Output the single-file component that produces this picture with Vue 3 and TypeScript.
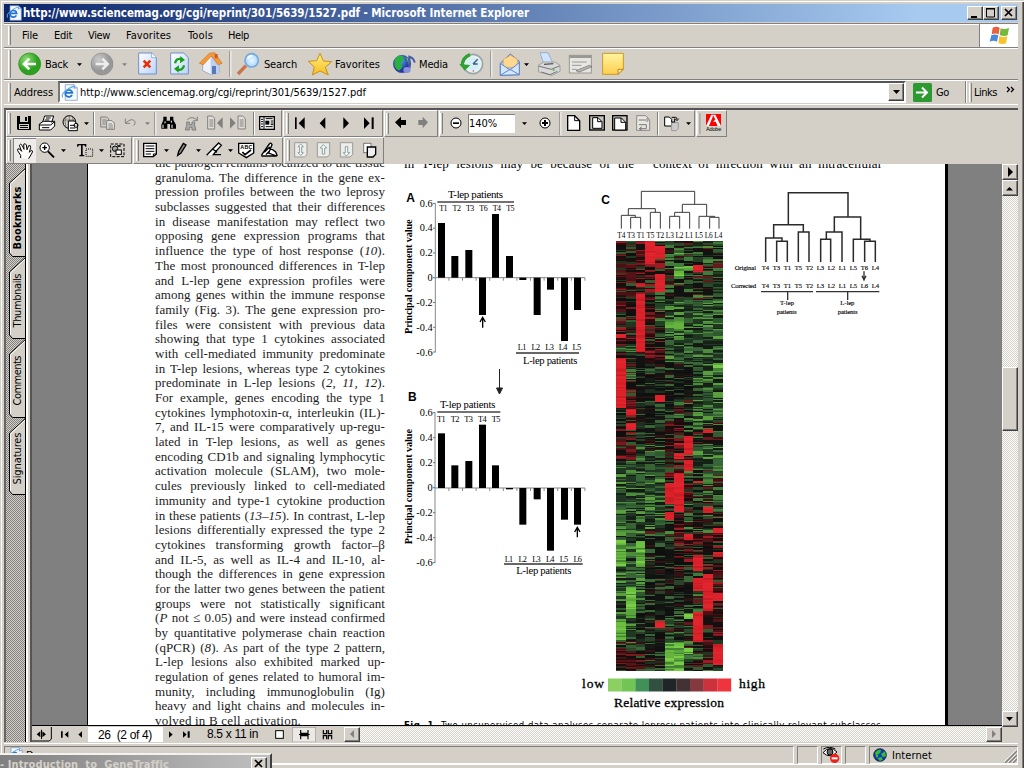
<script setup lang="ts">
interface Icon { x: number; w: number; ox?: number; k?: string; g: string }

// Stretches a label to its nominal width through letter spacing.
const vFit = {
  mounted(el: HTMLElement, b: { value: number }) {
    const n = (el.textContent ?? '').length
    el.style.letterSpacing = (b.value - el.getBoundingClientRect().width) / n + 'px'
  },
}

const p = (d: string, f = 'none', s = 'none', w = 3) =>
  `<path d="${d}" fill="${f}" stroke="${s}" stroke-width="${w}"/>`
const box = (x: number, y: number, w: number, h: number, f = 'none', s = 'none', k = 3) =>
  `<rect x="${x}" y="${y}" width="${w}" height="${h}" fill="${f}" stroke="${s}" stroke-width="${k}"/>`
const circ = (x: number, y: number, r: number, f = 'none', s = 'none', k = 3) =>
  `<circle cx="${x}" cy="${y}" r="${r}" fill="${f}" stroke="${s}" stroke-width="${k}"/>`
const dd = (x: number, y: number, f = '#000') => p(`M${x} ${y}h15l-7.5 8z`, f)
const grip = (x: number, y: number, h = 63) => box(x, y, 3, h, '#fff') + box(x + 6, y, 3, h, '#808080') + box(x + 3, y, 3, h, '#d4d0c8')
const sep = (x: number, y: number, h = 78) => box(x, y, 3, h, '#808080') + box(x + 3, y, 3, h, '#fff')
const vb = (i: Icon, y: number, h: number) => `${(i.x - (i.ox ?? 0)) * 3} ${y * 3} ${i.w * 3} ${h * 3}`

const G = '#808080'
const K = '#000'

const stdLeft: Icon[] = [
  { x: 5, w: 40, g: grip(24, 150, 84) + circ(89, 192, 33, 'url(#gGreen)', '#2a8a1c', 2) + p('M108 192H74M88 176L72 192L88 208', 'none', '#fff', 8) },
]
const stdA: Icon[] = [
  { x: 73, w: 13, g: dd(231, 190) },
  { x: 86, w: 34, g: circ(306, 192, 33, 'url(#gGray)', '#8c8c8c', 2) + p('M287 192h34M307 176l16 16l-16 16', 'none', '#eee', 8) },
  { x: 120, w: 12, g: dd(366, 190, G) },
  { x: 132, w: 34, g: p('M416 159h39l14 14v49h-53z', 'url(#gPage)', '#6f8fd0') + p('M455 159v14h14', '#fff', '#6f8fd0', 2) + p('M431 182l20 20M451 182l-20 20', 'none', '#e8300c', 8) },
  { x: 166, w: 32, g: p('M512 159h39l14 14v49h-53z', 'url(#gPage)', '#6f8fd0') + p('M525 190q4-18 22-12', 'none', '#16a016', 7) + p('M541 168l14 12l-15 10z', '#16a016') + p('M552 196q-3 18-22 12', 'none', '#16a016', 7) + p('M536 218l-14-12l15-10z', '#16a016') },
  { x: 198, w: 30, g: p('M608 190l24-26l26 30v24l-26 6l-24-12z', '#eef3fb', '#8090b0', 2) + p('M632 164l26 30v24l-26 6z', '#bdd0f0') + p('M598 190l30-30l16-2l22 32l-12 4l-20-26l-24 26z', '#f49a38', '#c8731c', 2) + box(644, 162, 9, 13, '#d05a30') + box(636, 198, 12, 24, '#5878b8') },
  { x: 228, w: 8, g: sep(688, 153, 78) },
  { x: 236, w: 24, g: p('M738 197l-24 25', 'none', '#c8734c', 10) + circ(755, 181, 20, 'url(#gLens)', '#78a8e0', 5) + p('M743 176q4-10 14-8', 'none', '#fff', 5) },
]
const stdB: Icon[] = [
  { x: 304, w: 29, g: p('M960 160l10 23l25 2l-19 17l9 23l-25-12l-23 12l6-24l-18-17l25-2z', 'url(#gStar)', '#c89018', 3) },
]
const stdC: Icon[] = [
  { x: 390, ox: 330, w: 28, g: circ(216, 192, 26, 'url(#gGlobe)', '#3848a8', 2) + p('M194 178q10-16 24-10l4 12l-10 10l6 10l-10 12q-18-8-14-24z', '#28b040') + p('M228 170q12 6 8 24', '#5cc84c') + p('M238 208v-38q14 4 16 18', 'none', '#4858a8', 6) + `<ellipse cx="231" cy="210" rx="11" ry="9" fill="#8890d8"/>` },
]
const stdD: Icon[] = [
  { x: 453, ox: 330, w: 34, g: circ(429, 192, 29, '#e8f0f0', '#98a8a8', 5) + circ(429, 192, 20, '#d4eef8') + p('M429 192l14-14M429 192h14', 'none', '#405880', 4) + p('M396 198q2-26 24-34', 'none', '#30a030', 10) + p('M388 192l16 20l17-17z', '#30a030') + circ(430, 213, 2, '#d33') },
  { x: 487, ox: 330, w: 10, g: sep(481, 153, 78) },
  { x: 497, ox: 330, w: 34, g: p('M511 190l30-28l27 22v40l-57 2z', '#a8c8f0', '#5078b8', 3) + p('M520 178l22-12l20 12v24h-42z', '#ffd890', '#e0a050', 2) + p('M511 190l29 20l28-22v36l-57 2zM511 226l29-18l28 16', '#d4e6fc', '#6088c8', 3) + dd(582, 190) },
  { x: 531, ox: 330, w: 34, g: p('M630 158h24l14 30h-28z', '#d0e4fc', '#7898c8', 2) + p('M625 196l16-10h34l15 10v18l-24 12l-40-10z', '#d8d8d8', '#888', 2) + p('M625 198l38 10l26-10M634 216l26 8l22-10', 'none', '#777', 3) + p('M642 193l28-2', 'none', '#555', 4) + box(668, 208, 6, 4, '#3b3') },
  { x: 565, ox: 330, w: 32, g: box(718, 166, 66, 53, '#e8e6e0', '#989894', 3) + box(718, 166, 66, 8, '#989894') + p('M726 186h44M726 196h28M726 208h14', 'none', '#999', 3) + p('M738 212l40-16l8 4l-38 16z', '#bbb', '#666', 2) },
  { x: 597, ox: 330, w: 34, g: p('M818 160h62v48l-16 15h-46z', 'url(#gNote)', '#d09820', 3) + p('M864 223v-15h16z', '#ffe9a0', '#b88a20', 3) },
]

const row1a: Icon[] = [
  { x: 7, w: 6, g: grip(24, 339) },
  { x: 13, w: 24, g: p('M51 348h42v42h-39l-3-3z', K) + box(60, 348, 24, 18, '#d4d0c8') + box(75, 351, 6, 12, K) + box(57, 372, 30, 15, '#d4d0c8') + box(60, 375, 24, 3, K) + box(60, 381, 24, 3, K) },
  { x: 37, w: 24, g: p('M128 366l6-18h27l-6 20M118 372l12-8h34v14l-12 12h-34z', '#fff', K) + p('M118 375h34l12-10M126 383h22M138 354h14M134 360h14', 'none', K) },
  { x: 61, w: 32, g: circ(208, 366, 19, '#d4d0c8', K) + p('M190 360h36M208 348v36M198 350q-6 16 0 32M217 350q8 16 2 30', 'none', '#555', 2) + p('M205 363h18l9 9v20h-27z', '#fff', K) + p('M210 376h16M210 384h16', 'none', K) + circ(228, 376, 6, 'none', K) + dd(252, 367) },
  { x: 93, w: 27, g: sep(279, 336, 70) + p('M302 351h18l6 6v24h-24z', '#d4d0c8', G) + p('M320 362h16l7 7v19h-23z', '#e8e6e0', G) + p('M307 360h12M307 366h10M307 372h10M325 372h12M325 378h14M325 384h14', 'none', G) },
  { x: 120, w: 34, g: p('M376 356v14h14M377 369q20-18 28-4q2 6-4 12', 'none', G) + dd(435, 367, G) },
  { x: 154, w: 28, g: sep(463, 336, 70) + p('M490 350h10v12h10v-12h10v10l8 14v12h-18v-14h-8v14h-18v-12l6-14z', K) + p('M489 374v10M495 364v6M516 374v10M514 362v6', 'none', '#fff') },
  { x: 182, w: 22, g: p('M560 366h8v8h8v-8h8v10l4 14h-12v-8h-8v8h-12l4-14z', '#aaa', G) + p('M562 360q8-12 24-4l6 5M592 350v12h-12', 'none', G) },
  { x: 204, w: 23, g: p('M623 348h14l7 7v32h-21z', '#e0ded8', G) + p('M628 360h12M628 366h12M628 372h12M628 378h12', 'none', G) + p('M668 352v34l-17-17z', G) },
  { x: 227, w: 23, g: p('M690 352v34l17-17z', G) + p('M714 348h14l8 8v31h-22z', '#e0ded8', G) + p('M719 360h12M719 366h12M719 372h12M719 378h12', 'none', G) },
  { x: 250, w: 30, g: sep(759, 336, 70) + box(779, 350, 44, 38, '#fff', K, 4) + p('M792 350v38', 'none', K, 3) + p('M783 358h6M783 365h6M783 372h6M783 380h6M797 356h21M797 380h21M812 363h8M812 369h8M812 374h8', 'none', K) + box(796, 362, 12, 12, K) },
]
const row1b: Icon[] = [
  { x: 283, w: 30, g: grip(855, 339) + box(882, 352, 5, 35, K) + p('M911 352v35l-18-17z', K) },
  { x: 313, w: 20, g: p('M973 352v35l-17-17z', K) },
  { x: 333, ox: 330, w: 24, g: p('M37 352v35l17-17z', K) },
  { x: 357, ox: 330, w: 24, g: p('M99 352v35l17-17z', K) + box(122, 352, 6, 35, K) },
]
const row1c: Icon[] = [
  { x: 384, ox: 330, w: 26, g: grip(165, 339) + p('M192 367l18-17v10h15v15h-15v10z', K) },
  { x: 410, ox: 330, w: 26, g: p('M291 367l-16-17v10h-13v15h13v10z', G) },
]
const row1d: Icon[] = [
  { x: 439, ox: 330, w: 27, g: grip(327, 339) + circ(375, 369, 15, '#fff', K) + box(366, 367, 18, 5, K) },
]
const row1e: Icon[] = [
  { x: 515, ox: 330, w: 17, g: dd(573, 367) },
  { x: 532, ox: 330, w: 25, g: circ(642, 369, 15, '#fff', K) + p('M642 360v18M633 369h18', 'none', K, 6) },
  { x: 557, ox: 330, w: 27, g: sep(685, 336, 70) + p('M710 347h21l15 15v29h-36z', '#fff', K, 4) + p('M731 347v15h15', 'none', K, 3) },
  { x: 584, ox: 330, w: 23, g: box(776, 347, 44, 43, '#c8c4bc', K, 4) + p('M785 353h16l12 12v20h-28z', '#fff', K) + p('M800 353v12h12', 'none', K) },
  { x: 607, ox: 330, w: 23, g: box(845, 347, 43, 43, '#c8c4bc', K, 4) + p('M851 354h20l13 13v23h-33z', '#fff', K) + p('M870 354v13h14', 'none', K) },
  { x: 630, ox: 330, w: 25, g: p('M917 347h27l12 12v32h-39z', '#e8e6e0', '#888') + p('M923 360h24M947 354l5 6l-5 6M924 374h22v12h-22M933 380l-8 6l8 6', 'none', '#777', 3) },
  { x: 655, ox: 670, w: 38, g: sep(-42, 336, 70) + p('M-19 351h14l7 7v20h-21z', '#fff', K) + p('M2 368h20v18l-6 6h-14z', '#ccc', '#999') + p('M2 352h12q4 0 4 6M12 356l6 6l5-6M3 366h8v-10', 'none', K) + dd(45, 367) },
]
const row1f: Icon[] = [
  { x: 696, ox: 670, w: 29, g: grip(79, 339) + box(105, 342, 45, 36, '#f00') + p('M105 378l16-34h12l17 34h-10l-6-13h-8l7-6l-6-13l-13 32z', '#fff') + `<text x="105" y="394" textLength="46" font-size="17" font-family="Liberation Sans">Adobe</text>` },
]
const row2a: Icon[] = [
  { x: 7, w: 6, g: grip(24, 420) },
  { x: 13, w: 23, k: 'down', g: p('M62 474v-8l-9-14q-2-8 6-5l6 7l-7-18q4-7 8 0l6 12l-1-15q5-5 8 2l2 14l5-12q6-3 6 5l-4 15l6-6q6 0 2 8l-10 17', '#fff', K) },
  { x: 36, w: 31, g: circ(134, 443, 14, '#fff', K) + p('M144 454l18 18', 'none', K, 6) + p('M134 436v14M127 443h14', 'none', K, 4) + dd(183, 448) },
  { x: 67, w: 39, g: p('M232 432h27v8h-3l-3-4h-5v28l5 2v3h-15v-3l5-2v-28h-6l-3 4h-3z', K) + `<rect x="258" y="447" width="20" height="22" fill="none" stroke="#000" stroke-width="3" stroke-dasharray="3 3"/>` + dd(297, 448) },
  { x: 106, w: 25, g: `<rect x="332" y="432" width="40" height="38" fill="none" stroke="#000" stroke-width="3" stroke-dasharray="9 4"/>` + circ(345, 446, 8, '#aaa', K) + box(348, 450, 16, 13, '#fff', K) + p('M352 438h10', 'none', K, 5) },
]
const row2b: Icon[] = [
  { x: 133, w: 37, g: grip(405, 420) + p('M428 430h38v32l-9 8h-29z', '#fff', K, 4) + p('M434 438h26M434 446h26M434 454h26M434 462h16M457 470v-8h9', 'none', K) + dd(489, 448) },
  { x: 170, w: 33, g: p('M530 466l3-12l14-24l8 5l-15 24z', '#888', K, 4) + dd(585, 448) },
  { x: 203, w: 31, g: p('M617 466l18-19l18-18l8 7l-17 19l-7 9h23M636 448l12 9', '#fff', K, 4) + dd(681, 448) },
  { x: 234, w: 24, g: p('M713 430h45v29l-22 14l-23-14z', '#fff', K, 4) + `<text x="718" y="446" textLength="36" font-size="16" font-weight="bold" font-family="Liberation Sans">ABC</text>` + p('M724 456l8 8l18-14', 'none', K, 5) },
  { x: 258, w: 24, g: p('M781 466l24-34q4-6 8 2l-10 25l24 9h-46M790 457l15-15l19 14l5 12M795 464l12-13', '#fff', K, 4) },
]
const page2 = (x: number) => p(`M${x} 428h37v36l-8 7h-29z`, '#eeece8', '#999')
const row2c: Icon[] = [
  { x: 284, w: 31, g: grip(858, 420) + page2(881) + p('M899 432l-8 8h5v18h-5l8 8l8-8h-5v-18h5z', '#fff', '#527878', 2) },
  { x: 315, w: 23, g: page2(949) + p('M967 434l-9 10h6v18h7v-18h6z', '#fff', '#527878', 2) },
  { x: 338, ox: 330, w: 21, g: page2(28) + p('M46 468l-9-10h6v-18h7v18h6z', '#fff', '#527878', 2) },
  { x: 359, ox: 330, w: 23, g: box(98, 430, 22, 28, '#fff', '#777') + p('M109 441h25v22l-8 8h-17z', '#eee', K, 4) },
]

const articleLines = [
  'the pathogen remains localized to the tissue', 'granuloma. The difference in the gene ex-', 'pression profiles between the two leprosy',
  'subclasses suggested that their differences', 'in disease manifestation may reflect two', 'opposing gene expression programs that',
  'influence the type of host response (<i>10</i>).', 'The most pronounced differences in T-lep', 'and L-lep gene expression profiles were',
  'among genes within the immune response', 'family (Fig. 3). The gene expression pro-', 'files were consistent with previous data',
  'showing that type 1 cytokines associated', 'with cell-mediated immunity predominate', 'in T-lep lesions, whereas type 2 cytokines',
  'predominate in L-lep lesions (<i>2, 11, 12</i>).', 'For example, genes encoding the type 1', 'cytokines lymphotoxin-α, interleukin (IL)-',
  '7, and IL-15 were comparatively up-regu-', 'lated in T-lep lesions, as well as genes', 'encoding CD1b and signaling lymphocytic',
  'activation molecule (SLAM), two mole-', 'cules previously linked to cell-mediated', 'immunity and type-1 cytokine production',
  'in these patients (<i>13–15</i>). In contrast, L-lep', 'lesions differentially expressed the type 2', 'cytokines transforming growth factor–β',
  'and IL-5, as well as IL-4 and IL-10, al-', 'though the differences in gene expression', 'for the latter two genes between the patient',
  'groups were not statistically significant', '(<i>P</i> not ≤ 0.05) and were instead confirmed', 'by quantitative polymerase chain reaction',
  '(qPCR) (<i>8</i>). As part of the type 2 pattern,', 'L-lep lesions also exhibited marked up-', 'regulation of genes related to humoral im-',
  'munity, including immunoglobulin (Ig)', 'heavy and light chains and molecules in-',
]

const barX = [129, 169, 211, 252, 291, 333, 373, 416, 456, 498, 537]
const barsA = [189, 288, 270, 465, 162, 288, 360, 465, 389, 543, 450]
const barsB = [220, 316, 303, 194, 316, 388, 494, 418, 572, 479, 494]
const ticks = ['0.6', '0.4', '0.2', '0', '-0.2', '-0.4', '-0.6']
const topA = ['T1', 'T2', 'T3', 'T6', 'T4', 'T5']
const botA = ['L1', 'L2', 'L3', 'L4', 'L5']
const topB = ['T1', 'T2', 'T3', 'T4', 'T5']
const botB = ['L1', 'L2', 'L3', 'L4', 'L5', 'L6']
const heatCols = ['T4', 'T3', 'T1', 'T5', 'T2', 'L3', 'L2', 'L1', 'L5', 'L6', 'L4']
const original = ['T4', 'T3', 'T1', 'T5', 'T2', 'L3', 'L2', 'L1', 'L5', 'T6', 'L4']
const corrected = ['T4', 'T3', 'T1', 'T5', 'T2', 'L3', 'L2', 'L1', 'L5', 'L6', 'L4']
const legend = ['#8ccf62', '#72c455', '#41905a', '#32503f', '#202628', '#433234', '#84393e', '#cc323c', '#ee343c']

// Expression zones: [first column, last column, top, bottom, kind]
type Zone = [number, number, number, number, string]
const zones: Zone[] = [
  [3, 3, 241, 264, 'R'], [4, 4, 246, 258, 'R'], [4, 4, 273, 292, 'R'], [8, 8, 264, 272, 'R'], [2, 2, 283, 287, 'R'], [2, 2, 294, 352, 'R'],
  [0, 0, 334, 338, 'R'], [0, 0, 357, 408, 'R'], [1, 1, 407, 415, 'R'], [1, 1, 423, 429, 'R'], [4, 4, 395, 401, 'R'], [7, 7, 434, 455, 'R'],
  [7, 7, 460, 471, 'R'], [6, 6, 442, 445, 'R'], [6, 6, 453, 458, 'R'], [6, 6, 472, 512, 'R'], [5, 5, 483, 503, 'R'], [5, 5, 512, 520, 'R'],
  [8, 8, 479, 483, 'R'], [10, 10, 527, 532, 'R'], [10, 10, 551, 556, 'R'], [8, 8, 555, 570, 'R'], [8, 8, 578, 591, 'R'], [8, 8, 612, 642, 'R'],
  [9, 9, 573, 611, 'R'], [7, 7, 534, 540, 'R'], [10, 10, 643, 665, 'R'], [4, 4, 621, 628, 'R'], [9, 9, 507, 512, 'R'], [9, 9, 429, 433, 'R'], [10, 10, 593, 601, 'R'],
  [6, 6, 266, 278, 'B'], [7, 7, 266, 271, 'B'], [6, 6, 251, 255, 'B'], [6, 6, 319, 330, 'B'], [5, 5, 320, 327, 'B'], [10, 10, 361, 372, 'B'],
  [0, 0, 540, 567, 'B'], [2, 2, 541, 566, 'B'], [1, 1, 587, 617, 'B'], [0, 0, 618, 640, 'B'], [5, 6, 643, 671, 'B'], [7, 7, 612, 618, 'B'], [7, 7, 648, 654, 'B'],
  [1, 1, 304, 333, 'D'], [4, 4, 258, 273, 'D'], [1, 1, 380, 424, 'D'], [3, 4, 340, 362, 'D'], [0, 1, 429, 460, 'D'], [5, 6, 420, 480, 'D'], [8, 10, 532, 572, 'D'],
  [10, 10, 572, 643, 'D'], [9, 9, 611, 665, 'D'], [6, 6, 515, 540, 'D'], [7, 7, 480, 500, 'D'], [6, 7, 540, 570, 'D'], [0, 2, 650, 671, 'D'], [0, 3, 241, 345, 'D'],
  [2, 7, 362, 400, 'K'], [3, 7, 540, 612, 'K'], [0, 5, 400, 440, 'K'], [2, 4, 612, 671, 'K'],
  [8, 10, 352, 420, 'G'], [8, 10, 445, 470, 'G'], [0, 2, 520, 640, 'G'], [5, 10, 300, 362, 'G'], [0, 4, 450, 530, 'G'],
]
const palette: Record<string, string[]> = {
  R: ['#dc222b', '#d81f28', '#dc222b', '#e0252e', '#c81d25'],
  B: ['#66b43e', '#78cc48', '#5aa53c', '#6cc040', '#438435'],
  D: ['#2e0c0e', '#541317', '#141010', '#781a1e', '#151010', '#9b1c22', '#1e3820', '#461216', '#100f0f', '#325c30'],
  K: ['#0f1010', '#151a14', '#0e0e0e', '#1d2d1e', '#294229', '#121412', '#351113', '#3a6637', '#121212'],
  G: ['#386434', '#1f3820', '#4d8c3a', '#152016', '#5a9e3e', '#2e5830', '#38663a', '#223424', '#131813'],
  M: ['#244024', '#111211', '#335c30', '#14120f', '#4e8b3a', '#3a1214', '#182618', '#427a3c', '#111', '#641a1d', '#274b2a'],
}
let seed = 20031
const rnd = () => {
  seed = (seed * 1103515245 + 12345) % 2147483648
  return seed / 2147483648
}
const cells: { x: number; y: number; h: number; c: string }[] = []
for (let c = 0; c < 11; c++) {
  let y = 241
  while (y < 671) {
    const z = zones.find(q => c >= q[0] && c <= q[1] && y >= q[2] && y < q[3])
    const set = palette[z ? z[4] : 'M']
    const h = Math.min(1 + Math.floor(rnd() * rnd() * 3.4), 671 - y)
    cells.push({ x: 616.2 + c * 9.66, y, h, c: set[Math.floor(rnd() * set.length)] })
    y += h
  }
}
const sideTabs = [
  { t: 'Bookmarks', y: 169, e: 257, b: true, w: 63, m: 218 },
  { t: 'Thumbnails', y: 258, e: 339, b: false, w: 54, m: 300.5 },
  { t: 'Comments', y: 340, e: 418, b: false, w: 50, m: 380.5 },
  { t: 'Signatures', y: 419, e: 495, b: false, w: 52, m: 458.5 },
]
const menu = [{ t: 'File', w: 16, x: 22 }, { t: 'Edit', w: 18, x: 54 }, { t: 'View', w: 22, x: 88 }, { t: 'Favorites', w: 45, x: 126 }, { t: 'Tools', w: 25, x: 188 }, { t: 'Help', w: 21, x: 228 }]
const gap = (i: number) => (i ? menu[i].x - menu[i - 1].x - menu[i - 1].w : 17)
</script>

<template>
  <div class="window">
    <svg class="defs" width="0" height="0">
      <defs>
        <radialGradient id="gGreen" cx=".35" cy=".3"><stop offset="0" stop-color="#8be070" /><stop offset="1" stop-color="#2da020" /></radialGradient>
        <radialGradient id="gGray" cx=".35" cy=".3"><stop offset="0" stop-color="#ccc" /><stop offset="1" stop-color="#989898" /></radialGradient>
        <linearGradient id="gPage" x2="1" y2="1"><stop offset="0" stop-color="#fff" /><stop offset="1" stop-color="#b8d4f8" /></linearGradient>
        <radialGradient id="gLens"><stop offset="0" stop-color="#e8f8ff" /><stop offset="1" stop-color="#a8d8fc" /></radialGradient>
        <linearGradient id="gStar" x2="0" y2="1"><stop offset="0" stop-color="#fff080" /><stop offset="1" stop-color="#f8bc20" /></linearGradient>
        <radialGradient id="gGlobe" cx=".4" cy=".3"><stop offset="0" stop-color="#58b0f0" /><stop offset="1" stop-color="#2838a0" /></radialGradient>
        <linearGradient id="gNote" x2="0" y2="1"><stop offset="0" stop-color="#fff4a0" /><stop offset="1" stop-color="#ffcf50" /></linearGradient>
        <pattern id="hatch" width="2" height="2" patternUnits="userSpaceOnUse"><rect width="2" height="2" fill="#d4d0c8" /><rect width="1" height="1" fill="#808080" /><rect x="1" y="1" width="1" height="1" fill="#808080" /></pattern>
        <symbol id="ie" viewBox="0 0 48 48">
          <path d="M12 2h25l9 9v35H12z" fill="#f4f8ff" stroke="#7890c0" stroke-width="2" />
          <path d="M37 2v9h9" fill="#cfe0f8" stroke="#7890c0" stroke-width="2" />
          <path d="M31 31a10 10 0 1 1 1-6H14" fill="none" stroke="#2474d0" stroke-width="5" />
          <path d="M5 38Q-2 28 20 14T37 13" fill="none" stroke="#58a8ee" stroke-width="3" />
        </symbol>
      </defs>
    </svg>

    <header class="title">
      <svg width="16" height="16"><use href="#ie" /></svg>
      <span v-fit="506" class="fit cap">http://www.sciencemag.org/cgi/reprint/301/5639/1527.pdf - Microsoft Internet Explorer</span>
      <div class="sysbtns">
        <button><svg width="14" height="12"><path d="M3 9h6v2H3z" /></svg></button>
        <button><svg width="14" height="12"><path d="M2.5 2h8v8h-8zM2 1.5h9" fill="none" stroke="#000" /></svg></button>
        <button class="close"><svg width="14" height="12"><path d="M3 2l7 7M10 2L3 9" fill="none" stroke="#000" stroke-width="1.7" /></svg></button>
      </div>
    </header>

    <nav class="band menubar">
      <i class="grip" />
      <span v-for="(m, i) in menu" :key="m.t" v-fit="m.w" class="fit" :style="{ marginLeft: gap(i) - (i ? 0 : 6) + 'px' }">{{ m.t }}</span>
      <div class="flag">
        <svg width="38" height="23" viewBox="930 73 114 69">
          <path d="M968 84q10-6 21 0l-3 20q-10-5-21 0z" fill="#e8603c" />
          <path d="M992 86q12 5 25-1l-4 22q-12 4-24-1z" fill="#74b83c" />
          <path d="M964 107q10-5 21 0l-4 19q-10-5-22 0z" fill="#4a88dc" />
          <path d="M988 109q12 5 24 1l-4 21q-12 4-23-1z" fill="#f8c22c" />
        </svg>
      </div>
    </nav>

    <div class="band standard">
      <svg v-for="i in stdLeft" :key="i.x" :width="i.w" height="30" :viewBox="vb(i, 49, 30)" v-html="i.g" />
      <span v-fit="23" class="fit b1">Back</span>
      <svg v-for="i in stdA" :key="i.x" :width="i.w" height="30" :viewBox="vb(i, 49, 30)" v-html="i.g" />
      <span v-fit="33" class="fit b2">Search</span>
      <svg v-for="i in stdB" :key="i.x" :width="i.w" height="30" :viewBox="vb(i, 49, 30)" v-html="i.g" />
      <span v-fit="45" class="fit b3">Favorites</span>
      <svg v-for="i in stdC" :key="i.x" :width="i.w" height="30" :viewBox="vb(i, 49, 30)" v-html="i.g" />
      <span v-fit="29" class="fit b4">Media</span>
      <svg v-for="i in stdD" :key="i.x" :width="i.w" height="30" :viewBox="vb(i, 49, 30)" v-html="i.g" />
    </div>

    <div class="band address">
      <i class="grip" />
      <span v-fit="39" class="fit lab">Address</span>
      <div class="field">
        <svg width="17" height="17"><use href="#ie" /></svg>
        <span v-fit="286" class="fit url">http://www.sciencemag.org/cgi/reprint/301/5639/1527.pdf</span>
        <button class="drop"><svg width="13" height="14"><path d="M3 5h7l-3.500 4z" /></svg></button>
      </div>
      <svg class="go" width="19" height="19"><rect width="19" height="19" rx="1.500" fill="#2c9a30" /><path d="M3 9.500h11M9 4.500l5 5l-5 5" fill="none" stroke="#fff" stroke-width="2" /></svg>
      <span v-fit="13" class="fit golab">Go</span>
      <div class="links"><i class="grip" /><span v-fit="23" class="fit">Links</span>
        <svg width="9" height="18"><path d="M1 4l2.500 2.500L1 9M5 4l2.500 2.500L5 9" fill="none" stroke="#000" stroke-width="1.300" /></svg></div>
    </div>

    <main class="plugin">
      <div class="tools">
        <div class="group w274"><svg v-for="i in row1a" :key="i.x" :width="i.w" height="25" :viewBox="vb(i, 111, 25)" v-html="i.g" /></div>
        <div class="group w100"><svg v-for="i in row1b" :key="i.x" :width="i.w" height="25" :viewBox="vb(i, 111, 25)" v-html="i.g" /></div>
        <div class="group w54"><svg v-for="i in row1c" :key="i.x" :width="i.w" height="25" :viewBox="vb(i, 111, 25)" v-html="i.g" /></div>
        <div class="group w257">
          <svg v-for="i in row1d" :key="i.x" :width="i.w" height="25" :viewBox="vb(i, 111, 25)" v-html="i.g" />
          <div class="zoombox"><span v-fit="28" class="fit">140%</span></div>
          <svg v-for="i in row1e" :key="i.x" :width="i.w" height="25" :viewBox="vb(i, 111, 25)" v-html="i.g" />
        </div>
        <div class="group w31"><svg v-for="i in row1f" :key="i.x" :width="i.w" height="25" :viewBox="vb(i, 111, 25)" v-html="i.g" /></div>
      </div>
      <div class="tools">
        <div class="group w126"><svg v-for="i in row2a" :key="i.x" :class="i.k" :width="i.w" height="25" :viewBox="vb(i, 138, 25)" v-html="i.g" /></div>
        <div class="group w151"><svg v-for="i in row2b" :key="i.x" :width="i.w" height="25" :viewBox="vb(i, 138, 25)" v-html="i.g" /></div>
        <div class="group w100"><svg v-for="i in row2c" :key="i.x" :width="i.w" height="25" :viewBox="vb(i, 138, 25)" v-html="i.g" /></div>
      </div>

      <div class="body">
        <svg class="side" width="20" height="578" viewBox="6 164 20 578">
          <rect x="6" y="164" width="20" height="578" fill="url(#hatch)" />
          <g v-for="t in sideTabs" :key="t.t">
            <path :d="`M26 ${t.y - 1}L9.500 ${t.y + 14}V${t.e - 4}l3 3.500H26z`" fill="#d4d0c8" stroke="#000" />
            <path :d="`M25 ${t.y + 1}L10.500 ${t.y + 15}V${t.e - 4}`" fill="none" stroke="#fff" />
            <text :x="-t.m" y="21" transform="rotate(-90)" text-anchor="middle" :textLength="t.w" :font-weight="t.b ? 700 : 400" font-size="11">{{ t.t }}</text>
          </g>
          <path d="M25.500 164V742" stroke="#000" />
        </svg>
        <div class="rail" />

        <div class="center">
          <div class="canvas">
            <article class="paper">
              <div class="column">
                <p v-for="l in articleLines" :key="l" v-html="l" />
                <p class="last">volved in B cell activation.</p>
              </div>
              <svg class="figure" width="545" height="561" viewBox="400 164 545 561">
                <g font-size="13">
                  <text x="404" y="167.500" textLength="230" word-spacing="4">in T-lep lesions may be because of the</text>
                  <text x="653" y="167.500" textLength="229" word-spacing="3">context of infection with an intracellular</text>
                </g>

                <g transform="translate(395 160) scale(.33333)">
                  <text x="34" y="127" class="sans">A</text>
                  <text x="159" y="115" textLength="165" font-size="33">T-lep patients</text>
                  <path d="M127 126H357" stroke="#444" stroke-width="5" />
                  <text v-for="(t, i) in topA" :key="t" :x="145 + i * 40.200" y="154" text-anchor="middle" textLength="25" font-size="24">{{ t }}</text>
                  <path d="M121 130V577M121 353H570" stroke="#888" stroke-width="3" fill="none" />
                  <path v-for="i in 7" :key="i" :d="`M114 ${56 + i * 74.300}h7`" stroke="#777" stroke-width="3" />
                  <path v-for="i in 11" :key="'x' + i" :d="`M${121 + i * 40.800} 353v9`" stroke="#888" stroke-width="3" />
                  <text v-for="(t, i) in ticks" :key="t" x="113" :y="140 + i * 74.500" text-anchor="end" font-size="31">{{ t }}</text>
                  <rect v-for="(b, i) in barsA" :key="i" :x="barX[i]" :y="Math.min(b, 353)" width="21" :height="Math.abs(b - 353)" />
                  <text transform="translate(51 350) rotate(-90)" text-anchor="middle" textLength="344" font-size="31" font-weight="bold">Principal component value</text>
                  <path d="M263 503V474M255 486l8-14l8 14" fill="none" stroke="#000" stroke-width="4" />
                  <text v-for="(t, i) in botA" :key="t" :x="381 + i * 41.200" y="570" text-anchor="middle" textLength="26" font-size="25">{{ t }}</text>
                  <path d="M363 579H552" stroke="#333" stroke-width="4" />
                  <text x="384" y="612" textLength="163" font-size="32">L-lep patients</text>
                </g>
                <path d="M499.500 369V392M496.500 388l3 6l3-6z" stroke="#222" fill="#222" />

                <g transform="translate(395 360) scale(.33333)">
                  <text x="39" y="123" class="sans">B</text>
                  <text x="135" y="145" textLength="166" font-size="32">T-lep patients</text>
                  <path d="M127 156H316" stroke="#444" stroke-width="4" />
                  <text v-for="(t, i) in topB" :key="t" :x="139 + i * 41" y="185" text-anchor="middle" textLength="26" font-size="25">{{ t }}</text>
                  <path d="M120 157V608M120 384H570" stroke="#888" stroke-width="3" fill="none" />
                  <path v-for="i in 7" :key="i" :d="`M114 ${83 + i * 75}h7`" stroke="#777" stroke-width="3" />
                  <path v-for="i in 11" :key="'x' + i" :d="`M${121 + i * 40.800} 384v9`" stroke="#888" stroke-width="3" />
                  <text v-for="(t, i) in ticks" :key="t" x="113" :y="168 + i * 75" text-anchor="end" font-size="31">{{ t }}</text>
                  <rect v-for="(b, i) in barsB" :key="i" :x="barX[i]" :y="Math.min(b, 384)" width="21" :height="Math.abs(b - 384)" />
                  <text transform="translate(50 380) rotate(-90)" text-anchor="middle" textLength="346" font-size="31" font-weight="bold">Principal component value</text>
                  <path d="M547 532V504M539 516l8-14l8 14" fill="none" stroke="#000" stroke-width="4" />
                  <text v-for="(t, i) in botB" :key="t" :x="342 + i * 41.200" y="605" text-anchor="middle" textLength="25" font-size="25">{{ t }}</text>
                  <path d="M327 612H563" stroke="#333" stroke-width="4" />
                  <text x="364" y="642" textLength="165" font-size="32">L-lep patients</text>
                </g>

                <g transform="translate(590 160) scale(.33333)">
                  <text x="34" y="131" class="sans">C</text>
                  <path d="M154 146V94H314V133M115 166V146H196V157M94 206V166H136V172M122 206V172H152V206M181 206V157H211V206M277 157V133H350V169M254 169V157H299V206M239 206V169H269V206M327 206V169H374V172M359 206V172H387V206" fill="none" stroke="#3a3a3a" stroke-width="3" />
                  <text v-for="(t, i) in heatCols" :key="t" :x="94 + i * 29.100" y="233" text-anchor="middle" textLength="24" font-size="22">{{ t }}</text>
                  <path d="M595 194V98H774V171M551 234V194H640V216M527 306V234H576V244M560 306V244H592V306M625 306V216H657V306M733 216V171H812V238M709 238V216H756V306M692 306V238H722V306M790 306V238H840V244M824 306V244H856V306" fill="none" stroke="#2a2a2a" stroke-width="4.500" />
                  <g font-size="20" stroke="#000" stroke-width=".4">
                    <text x="434" y="329" textLength="64">Original</text>
                    <text x="423" y="384" textLength="75">Corrected</text>
                    <text v-for="(t, i) in original" :key="t" :x="526 + i * 33" y="329" text-anchor="middle" textLength="22">{{ t }}</text>
                    <text v-for="(t, i) in corrected" :key="t" :x="526 + i * 33" y="384" text-anchor="middle" textLength="22">{{ t }}</text>
                    <text x="570" y="436" textLength="42">T-lep</text>
                    <text x="560" y="462" textLength="60">patients</text>
                    <text x="751" y="436" textLength="42">L-lep</text>
                    <text x="743" y="462" textLength="60">patients</text>
                  </g>
                  <path d="M513 395H669M678 395H868M593 395v25M773 395v25M822 334v24M816 347l6 13l6-13" fill="none" stroke="#333" stroke-width="4" />
                </g>

                <g class="heat" shape-rendering="crispEdges">
                  <rect v-for="(c, i) in cells" :key="i" :x="c.x" :y="c.y" width="9.800" :height="c.h" :fill="c.c" />
                </g>
                <rect v-for="(c, i) in legend" :key="c" :x="608 + i * 13.670" y="678.500" width="13.800" height="13" :fill="c" />
                <g font-size="13.500" stroke="#000" stroke-width=".3">
                  <text x="582" y="688" textLength="22">low</text>
                  <text x="739" y="688" textLength="26">high</text>
                  <text x="614" y="707" textLength="110">Relative expression</text>
                </g>
                <text x="404" y="728" textLength="480" class="caption"><tspan font-weight="bold">Fig. 1.</tspan> Two unsupervised data analyses separate leprosy patients into clinically relevant subclasses.</text>
              </svg>
            </article>
          </div>

          <footer class="pagebar">
            <svg width="20" height="15" viewBox="93 51 60 45"><path d="M93 93h52l6-6V51" fill="none" stroke="#000" stroke-width="3" /><path d="M107 73l11-9v18zM135 73l-11-9v18zM120 59h3v28h-3z" /></svg>
            <svg width="36" height="15" viewBox="153 51 108 45"><path d="M180 64h5v19h-5zM202 64v19l-11-9.500zM243 64v19l-11-9.500z" /></svg>
            <div class="pageno"><span v-fit="54" class="fit">26&nbsp; (2 of 4)</span></div>
            <svg width="44" height="15" viewBox="489 51 132 45"><path d="M507 64v19l11-9.500zM549 64v19l11-9.500zM563 64h6v19h-6z" /></svg>
            <span v-fit="51" class="fit dim">8.5 x 11 in</span>
            <svg width="87" height="15" viewBox="771 51 261 45">
              <rect x="827" y="62" width="23" height="23" fill="#fff" stroke="#000" stroke-width="3" />
              <rect x="877" y="52" width="70" height="44" fill="#ece9e4" stroke="#999" stroke-width="2" />
              <path d="M902 60v10h22V60M902 88V77h22v11M897 73.500h32M970 60v11h10V60M985 60v11h10V60M970 88V77h10v11M985 88V77h10v11" fill="none" stroke="#000" stroke-width="3.500" />
            </svg>
            <div class="hscroll">
              <button><svg width="12" height="12"><path d="M8 2v8L4 6z" fill="#808080" /></svg></button>
              <button><svg width="12" height="12"><path d="M4 2v8l4-4z" fill="#808080" /></svg></button>
            </div>
          </footer>
        </div>

        <div class="vscroll">
          <button><svg width="12" height="12"><path d="M4 1v10l5-5z" /></svg></button>
          <button><svg width="12" height="11"><path d="M2 7.500h7L5.500 4z" /></svg></button>
          <div class="track"><div class="thumb" /></div>
          <button><svg width="12" height="12"><path d="M2 4h7L5.500 8z" /></svg></button>
        </div>
      </div>
    </main>

    <footer class="status">
      <div class="pane grow"><svg width="16" height="16"><use href="#ie" /></svg><span class="done">Done</span></div>
      <div class="pane small" />
      <div class="pane small">
        <svg width="20" height="17" viewBox="246 320 60 51"><path d="M249 337q20-24 42-2q-20 22-42 2z" fill="#fff" stroke="#000" stroke-width="3" /><circle cx="270" cy="335" r="9" fill="#666" stroke="#000" stroke-width="3" /><path d="M250 326q18-10 36 0" fill="none" stroke="#000" stroke-width="3" /><circle cx="284" cy="354" r="14" fill="#f02018" /><path d="M275 354h18" stroke="#fff" stroke-width="6" /></svg>
      </div>
      <div class="pane small" />
      <div class="pane zone">
        <svg width="14" height="14" viewBox="0 0 42 42"><circle cx="21" cy="21" r="19" fill="#1838b8" stroke="#000" stroke-width="2" /><path d="M6 14q8-11 18-8l-2 8l-8 6l2 6l-6 3zM24 18l12-8l3 14l-9 4zM14 30l12-3l3 9l-9 3z" fill="#30c030" /></svg>
        <span v-fit="40" class="fit">Internet</span>
        <svg class="resize" width="13" height="13"><path d="M1 13L13 1M5 13l8-8M9 13l4-4" stroke="#808080" stroke-width="1.500" /><path d="M0 12L12 0M4 12l8-8M8 12l4-4" stroke="#fff" stroke-width=".7" /></svg>
      </div>
    </footer>
    <aside class="popup">
      <span v-fit="168" class="fit">- Introduction&nbsp; to&nbsp; GeneTraffic</span>
      <button><svg width="14" height="12"><path d="M3 2l7 7M10 2L3 9" fill="none" stroke="#000" stroke-width="1.700" /></svg></button>
    </aside>
  </div>
</template>

<style>
html, body { margin: 0; background: #d4d0c8; overflow: hidden; }
</style>
<style scoped>
.window { position: relative; box-sizing: border-box; width: 1024px; height: 768px; overflow: hidden; display: flex; flex-direction: column; padding: 4px 6px 0 4px; background: #d4d0c8; box-shadow: inset 1px 1px #d4d0c8, inset 2px 2px #fff, inset -1px 0 #404040, inset -2px 0 #808080; font: 11px "DejaVu Sans Condensed", "DejaVu Sans", sans-serif; color: #000; }
.window * { box-sizing: border-box; }
.defs { position: absolute; }
svg { display: block; flex: none; }
.fit { display: inline-block; white-space: pre; flex: none; }
button { padding: 0; margin: 0; background: #d4d0c8; border: 1px solid; border-color: #fff #404040 #404040 #fff; box-shadow: inset -1px -1px #808080; display: flex; align-items: center; justify-content: center; flex: none; }
.title { height: 18px; flex: none; display: flex; align-items: center; padding: 0 1px 0 2px; background: linear-gradient(90deg, #0a246a, #a6caf0 90%); color: #fff; font-weight: bold; font-size: 11.500px; }
.cap { margin-left: 1px; }
.sysbtns { margin-left: auto; display: flex; }
.sysbtns button { width: 16px; height: 14px; }
.sysbtns .close { margin-left: 2px; }
.band { flex: none; display: flex; align-items: center; border-top: 1px solid #808080; box-shadow: inset 0 1px #fff; }
.grip { width: 3px; height: 19px; margin-left: 4px; background: #d4d0c8; border-left: 1px solid #fff; border-right: 1px solid #808080; flex: none; }
.menubar { height: 24px; margin-top: 1px; }
.flag { margin-left: auto; width: 39px; height: 23px; background: #fff; border-left: 1px solid #808080; }
.standard { height: 32px; padding: 1px 0 0 1px; }
.b1 { margin-right: 5px; }
.b2 { margin: 0 7px 0 4px; }
.b3 { margin: 0 10px 0 2px; }
.b4 { margin: 0 5px 0 1px; }
.address { height: 26px; padding: 1px 0 1px; border-bottom: 1px solid #fff; }
.address .lab { margin-left: 3px; margin-right: 5px; }
.field { width: 848px; height: 22px; background: #fff; border: 2px solid; border-color: #555 #fff #fff #777; display: flex; align-items: center; padding-left: 1px; }
.url { margin-left: 2px; }
.drop { margin-left: auto; width: 16px; height: 18px; }
.go { margin-left: 7px; }
.golab { margin-left: 4px; }
.links { margin-left: 16px; height: 22px; border-left: 1px solid #808080; box-shadow: inset 1px 0 #fff; display: flex; align-items: center; flex: 1; }
.links .grip { margin-left: 3px; }
.links .fit { margin-left: 2px; margin-right: 9px; }
.plugin { flex: none; margin-top: 3px; height: 634px; border-top: 2px solid #555; border-left: 2px solid #666; display: flex; flex-direction: column; }
.tools { display: flex; height: 27px; flex: none; gap: 1px; }
.group { height: 27px; display: flex; border: 1px solid; border-color: #fff #808080 #808080 #fff; overflow: hidden; flex: none; }
.w274 { width: 276px; }
.w100 { width: 100px; }
.w54 { width: 54px; }
.w257 { width: 256px; }
.w31 { width: 31px; }
.w126 { width: 126px; }
.w151 { width: 150px; }
.zoombox { width: 47px; height: 19px; margin: 3px 1px; background: #fff; border-top: 1px solid #808080; border-left: 1px solid #808080; padding: 2px 0 0; }
.down { background: #eeece8; box-shadow: inset 1px 1px #808080; }
.body { display: flex; height: 578px; flex: none; }
.rail { width: 6px; background: #d4d0c8; border-left: 2px solid #fff; border-right: 2px solid #555; }
.center { width: 970px; display: flex; flex-direction: column; }
.canvas { height: 562px; background: #808080; border-bottom: 1px solid #000; padding-left: 55px; overflow: hidden; }
.paper { width: 861px; height: 561px; background: #fff; border-left: 1px solid #000; border-right: 3px solid #000; display: flex; overflow: hidden; }
.column { width: 230px; margin: -8px 15px 0 67px; flex: none; font: 13px/14.700px "Liberation Serif", serif; letter-spacing: .05px; color: #1c1c1c; }
.column p { margin: 0; height: 14.700px; width: 230px; text-align: justify; text-align-last: justify; }
.column .last { text-align-last: left; letter-spacing: .2px; }
.figure { font-family: "Liberation Serif", serif; }
.sans { font: bold 36px "Liberation Sans", sans-serif; }
.caption { font: 9.500px "DejaVu Sans Condensed", sans-serif; }
.side text { font-family: "DejaVu Sans Condensed", sans-serif; }
.pagebar { height: 16px; display: flex; align-items: center; font: 12px "Liberation Sans", sans-serif; }
.pageno { width: 75px; height: 15px; background: #fff; padding: 1px 0 0 10px; }
.dim { margin: 0 -1px 0 0; }
.hscroll { flex: 1; height: 15px; display: flex; justify-content: space-between; background: repeating-conic-gradient(#fff 0 25%, #d4d0c8 0 50%) 0 0 / 2px 2px; }
.hscroll button { width: 16px; height: 15px; }
.vscroll { width: 16px; height: 563px; display: flex; flex-direction: column; }
.vscroll button { width: 16px; height: 16px; }
.track { flex: 1; background: repeating-conic-gradient(#fff 0 25%, #d4d0c8 0 50%) 0 0 / 2px 2px; padding-top: 171px; }
.thumb { height: 64px; background: #d4d0c8; border: 1px solid; border-color: #fff #404040 #404040 #fff; box-shadow: inset -1px -1px #808080; }
.status { height: 22px; flex: none; margin-top: 1px; border-top: 1px solid #fff; padding-top: 2px; display: flex; gap: 3px; border-bottom: 1px solid #fff; }
.pane { height: 18px; border: 1px solid; border-color: #808080 #fff #fff #808080; display: flex; align-items: center; }
.grow { flex: 1; padding-left: 2px; }
.small { width: 21px; }
.zone { width: 149px; padding-left: 3px; gap: 5px; }
.done { margin-left: 3px; }
.resize { margin-left: auto; align-self: flex-end; }
.popup { position: absolute; left: 0; top: 753px; width: 272px; height: 15px; display: flex; justify-content: space-between; background: linear-gradient(90deg, #808080, #c0c0c0); border-top: 2px solid #f4f2ec; border-right: 2px solid #404040; color: #d4d0c8; font-weight: bold; padding: 2px 3px 0 0; }
.popup .fit { margin-top: 1px; }
.popup button { width: 16px; height: 14px; }
</style>
